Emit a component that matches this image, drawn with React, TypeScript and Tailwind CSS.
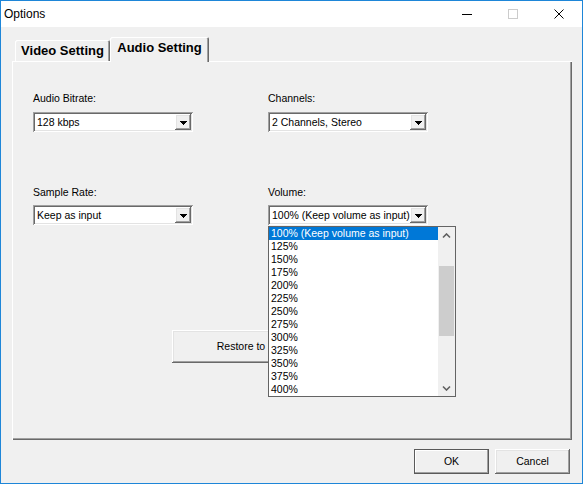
import type { ReactNode } from "react";

// classic 3D edges (win9x look): raised buttons, sunken fields, tab panel frame
const raised =
  "shadow-[inset_-1px_-1px_0_#696969,inset_1px_1px_0_#ffffff,inset_-2px_-2px_0_#a0a0a0,inset_2px_2px_0_#e3e3e3]";
const sunken =
  "shadow-[inset_1px_1px_0_#a0a0a0,inset_-1px_-1px_0_#ffffff,inset_2px_2px_0_#696969,inset_-2px_-2px_0_#e3e3e3]";
const frame = "shadow-[inset_1px_1px_0_#ffffff,inset_-1px_-1px_0_#696969,inset_-2px_-2px_0_#a0a0a0]";
const tabEdge = "shadow-[inset_1px_1px_0_#ffffff,inset_-1px_0_0_#696969,inset_-2px_0_0_#a0a0a0]";

const volumes = [
  "100% (Keep volume as input)",
  "125%",
  "150%",
  "175%",
  "200%",
  "225%",
  "250%",
  "275%",
  "300%",
  "325%",
  "350%",
  "375%",
  "400%",
];

function DropArrow() {
  return (
    <svg width="7" height="4" viewBox="0 0 7 4" shapeRendering="crispEdges">
      <path d="M0 0h7v1h-1v1h-1v1h-1v1h-1v-1h-1v-1h-1v-1h-1z" fill="#000" />
    </svg>
  );
}

function Chevron({ down }: { down?: boolean }) {
  return (
    <svg width="9" height="6" viewBox="0 0 9 6">
      <path d={down ? "M1 1.5 4.5 5 8 1.5" : "M1 4.5 4.5 1 8 4.5"} fill="none" stroke="#606060" strokeWidth="1.6" />
    </svg>
  );
}

function Combo({ value, children }: { value: string; children?: ReactNode }) {
  return (
    <div className="relative">
      <div className={`flex h-[20px] w-[160px] bg-white p-[2px] ${sunken}`}>
        <span className="flex-1 overflow-hidden whitespace-nowrap pl-[2px] leading-[16px]">{value}</span>
        <span className={`flex w-[16px] items-center justify-center bg-[#f0f0f0] pt-[1px] ${raised}`}>
          <DropArrow />
        </span>
      </div>
      {children}
    </div>
  );
}

function VolumeList() {
  return (
    <div className="absolute left-0 top-[21px] z-20 flex h-[171px] w-[188px] border border-[#646464] bg-white">
      <div className="flex-1">
        {volumes.map((v, i) => (
          <div
            key={v}
            className={`h-[13px] whitespace-nowrap pl-[2px] leading-[13px] ${i === 0 ? "bg-[#0078d7] text-white" : ""}`}
          >
            {v}
          </div>
        ))}
      </div>
      <div className="flex w-[17px] flex-col bg-[#f0f0f0]">
        <div className="flex h-[17px] items-center justify-center">
          <Chevron />
        </div>
        <div className="flex-1">
          <div className="mx-[1px] mt-[22px] h-[70px] bg-[#cdcdcd]" />
        </div>
        <div className="flex h-[17px] items-center justify-center">
          <Chevron down />
        </div>
      </div>
    </div>
  );
}

function Field({ label, value, gap, children }: { label: string; value: string; gap: string; children?: ReactNode }) {
  return (
    <div className="flex flex-col">
      <span className={`h-[13px] leading-[13px] ${gap}`}>{label}</span>
      <Combo value={value}>{children}</Combo>
    </div>
  );
}

export default function App() {
  return (
    <div className="flex h-[484px] w-[583px] flex-col border border-[#1e86d8] bg-[#f0f0f0] font-['Liberation_Sans',Arial,sans-serif] text-[10.5px] text-black">
      {/* title bar */}
      <div className="flex h-[26px] shrink-0 items-center bg-white">
        <span className="pl-[3px] text-[12px]">Options</span>
        <div className="ml-auto flex h-full">
          <div className="flex w-[46px] items-center justify-center">
            <svg width="10" height="10" viewBox="0 0 10 10">
              <path d="M0 5.5h10" stroke="#000" strokeWidth="1" />
            </svg>
          </div>
          <div className="flex w-[46px] items-center justify-center">
            <svg width="10" height="10" viewBox="0 0 10 10">
              <rect x="0.5" y="0.5" width="9" height="9" fill="none" stroke="#cccccc" strokeWidth="1" />
            </svg>
          </div>
          <div className="flex w-[46px] items-center justify-center">
            <svg width="10" height="10" viewBox="0 0 10 10">
              <path d="M0.5 0.5 9.5 9.5M9.5 0.5 0.5 9.5" stroke="#000" strokeWidth="1" />
            </svg>
          </div>
        </div>
      </div>

      <div className="flex flex-col pl-[11px] pr-[10px]">
        {/* tabs */}
        <div className="mt-[10px] flex h-[24px] items-end pl-[3px]">
          <div className={`flex h-[21px] w-[95px] items-center justify-center rounded-t-[2px] text-[13px] font-bold ${tabEdge}`}>
            Video Setting
          </div>
          <div
            className={`relative z-10 -mb-[1px] flex h-[25px] w-[99px] items-center justify-center rounded-t-[2px] bg-[#f0f0f0] pb-[3px] text-[13px] font-bold ${tabEdge}`}
          >
            Audio Setting
          </div>
        </div>

        {/* panel */}
        <div className={`flex h-[379px] flex-col pl-[21px] pt-[31px] ${frame}`}>
          <div className="grid grid-cols-[160px_160px] gap-x-[75px]">
            <Field label="Audio Bitrate:" value="128 kbps" gap="mb-[7px]" />
            <Field label="Channels:" value="2 Channels, Stereo" gap="mb-[7px]" />
            <div className="mt-[54px]">
              <Field label="Sample Rate:" value="Keep as input" gap="mb-[6px]" />
            </div>
            <div className="mt-[54px]">
              <Field label="Volume:" value="100% (Keep volume as input)" gap="mb-[6px]">
                <VolumeList />
              </Field>
            </div>
          </div>
          {/* the open list covers the right part of this button */}
          <button
            type="button"
            className={`ml-[139px] mt-[105px] flex h-[33px] w-[98px] items-center overflow-hidden whitespace-nowrap bg-[#f0f0f0] pl-[44px] ${raised}`}
          >
            <span className="block w-[50px] overflow-hidden">Restore to</span>
          </button>
        </div>

        {/* dialog buttons */}
        <div className="mt-[9px] flex justify-end gap-[6px] pr-[2px]">
          <button
            type="button"
            className="flex h-[25px] w-[75px] items-center justify-center border border-[#5a5a5a] bg-[#f0f0f0] shadow-[inset_-1px_-1px_0_#a0a0a0,inset_1px_1px_0_#ffffff]"
          >
            OK
          </button>
          <button type="button" className={`flex h-[25px] w-[75px] items-center justify-center bg-[#f0f0f0] ${raised}`}>
            Cancel
          </button>
        </div>
      </div>
    </div>
  );
}
